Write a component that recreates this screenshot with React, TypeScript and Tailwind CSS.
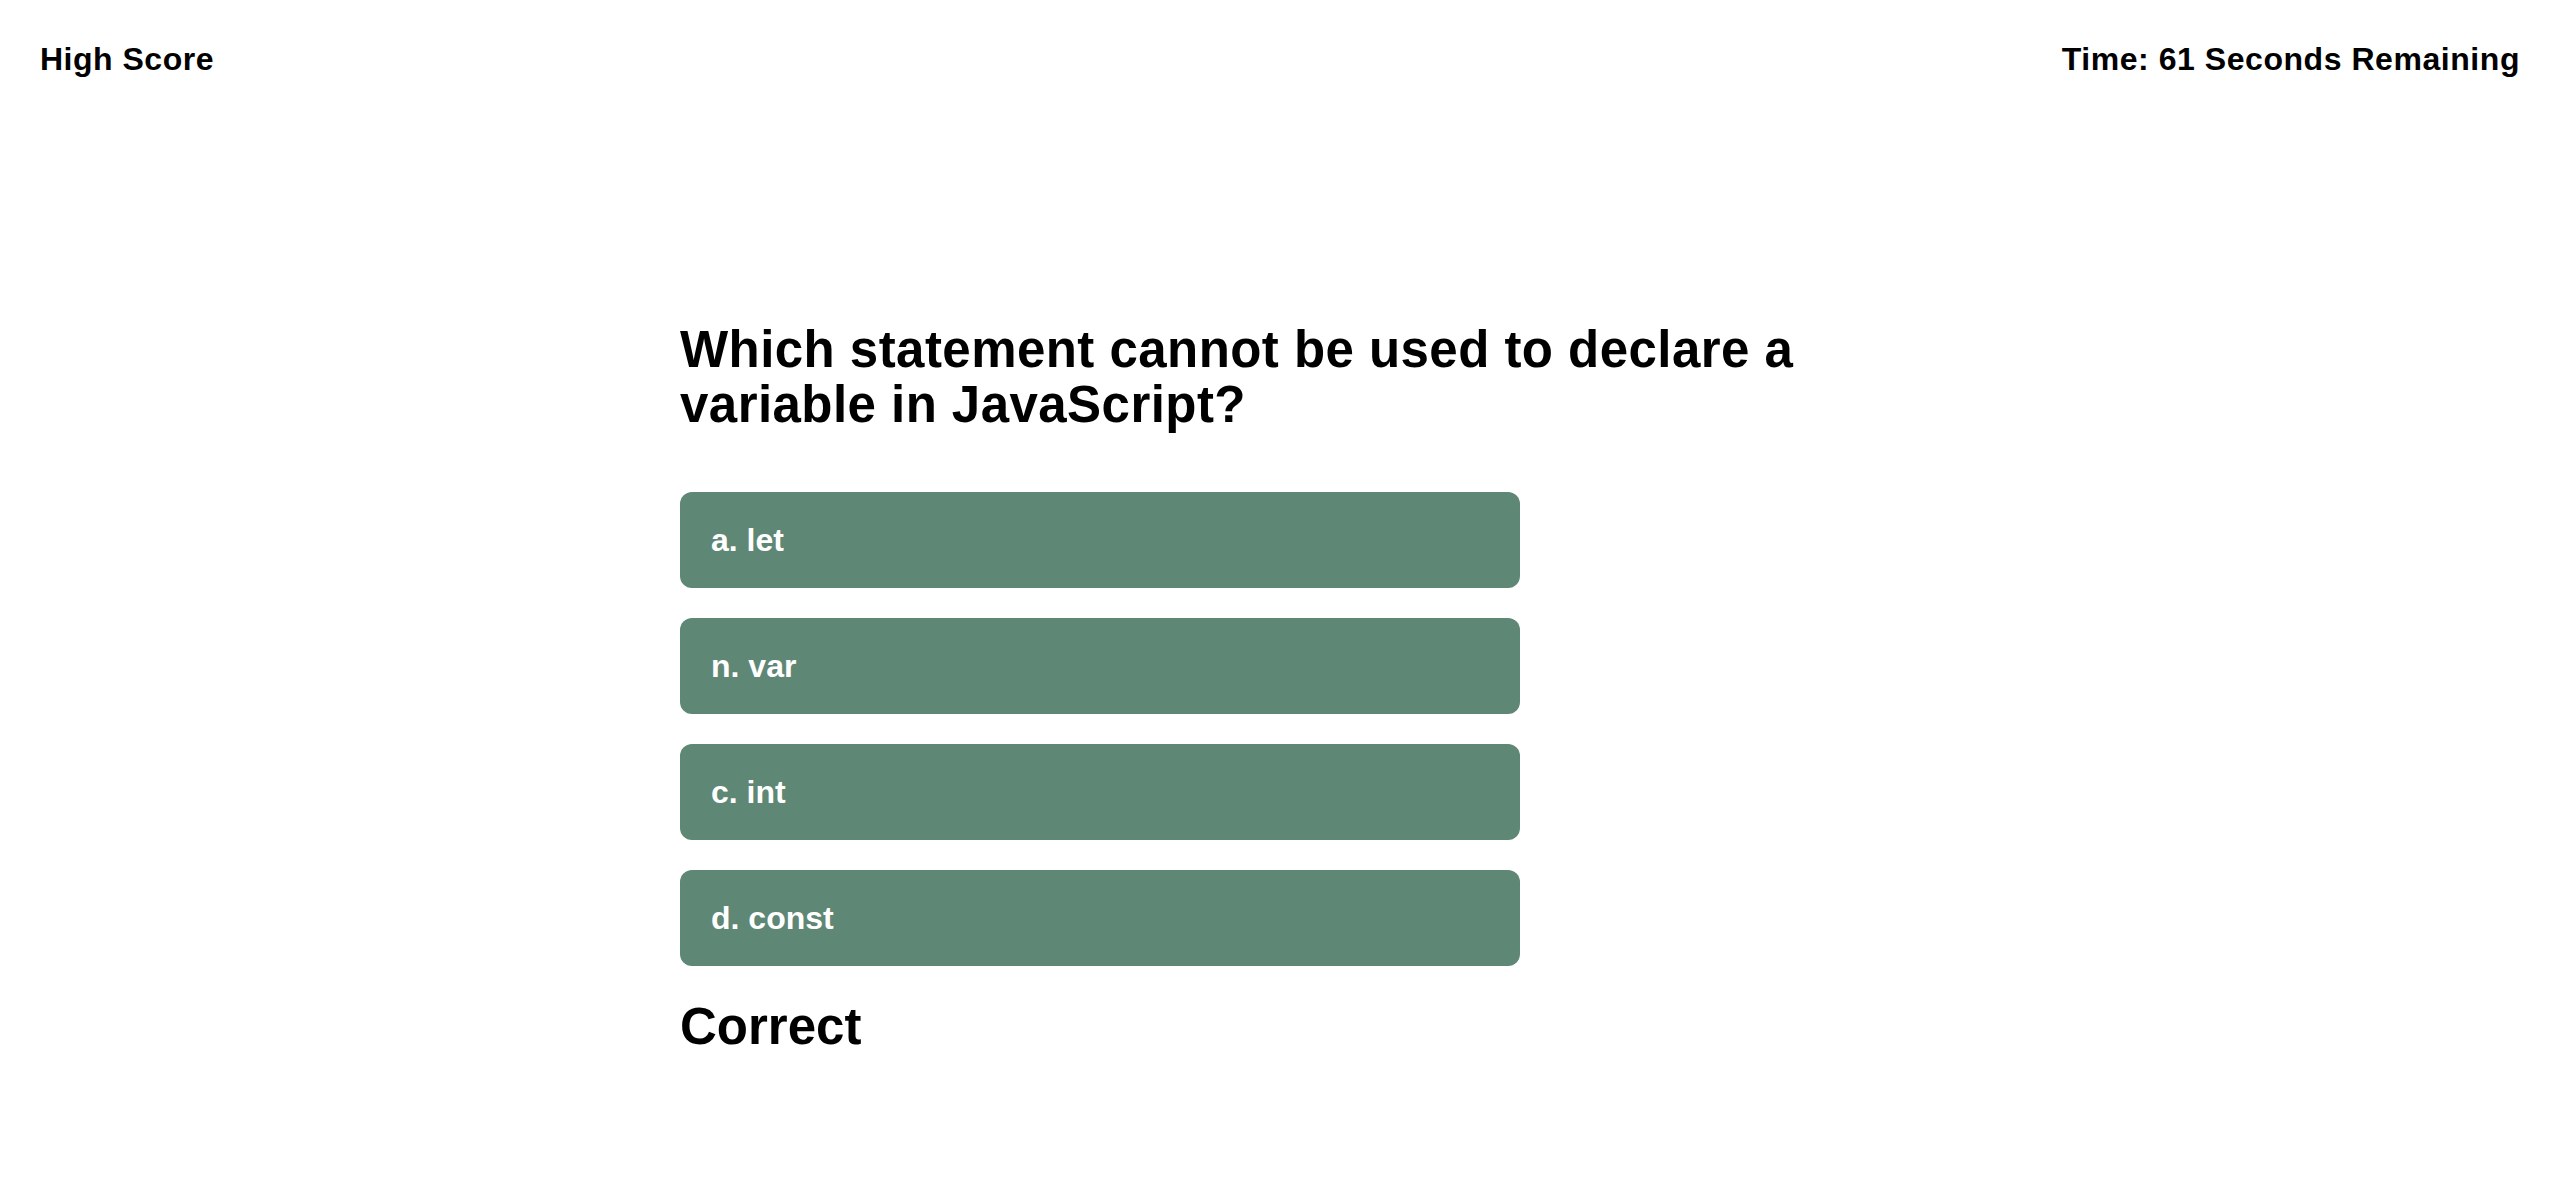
const choices = ['a. let', 'n. var', 'c. int', 'd. const']

export default function App() {
  return (
    <div className="min-h-screen bg-white text-black font-['Liberation_Sans',Arial,sans-serif]">
      <header className="flex items-center justify-between px-[40px] pt-[41px]">
        <span className="text-[32px] font-bold leading-[37px] tracking-[0.5px]">High Score</span>
        <span className="text-[32px] font-bold leading-[37px] tracking-[0.55px]">Time: 61 Seconds Remaining</span>
      </header>

      <main className="w-[1200px] mx-auto mt-[244px]">
        <h1 className="text-[51px] font-bold leading-[55px] tracking-[0.45px]">
          Which statement cannot be used to declare a variable in JavaScript?
        </h1>

        <div className="mt-[60px] flex flex-col gap-[30px]">
          {choices.map((c) => (
            <button
              key={c}
              className="w-[840px] h-[96px] rounded-[12px] bg-[#5f8775] text-white text-left px-[31px] text-[32px] font-bold"
            >
              {c}
            </button>
          ))}
        </div>

        <h2 className="mt-[31px] text-[51px] font-bold leading-[59px]">Correct</h2>
      </main>
    </div>
  )
}
